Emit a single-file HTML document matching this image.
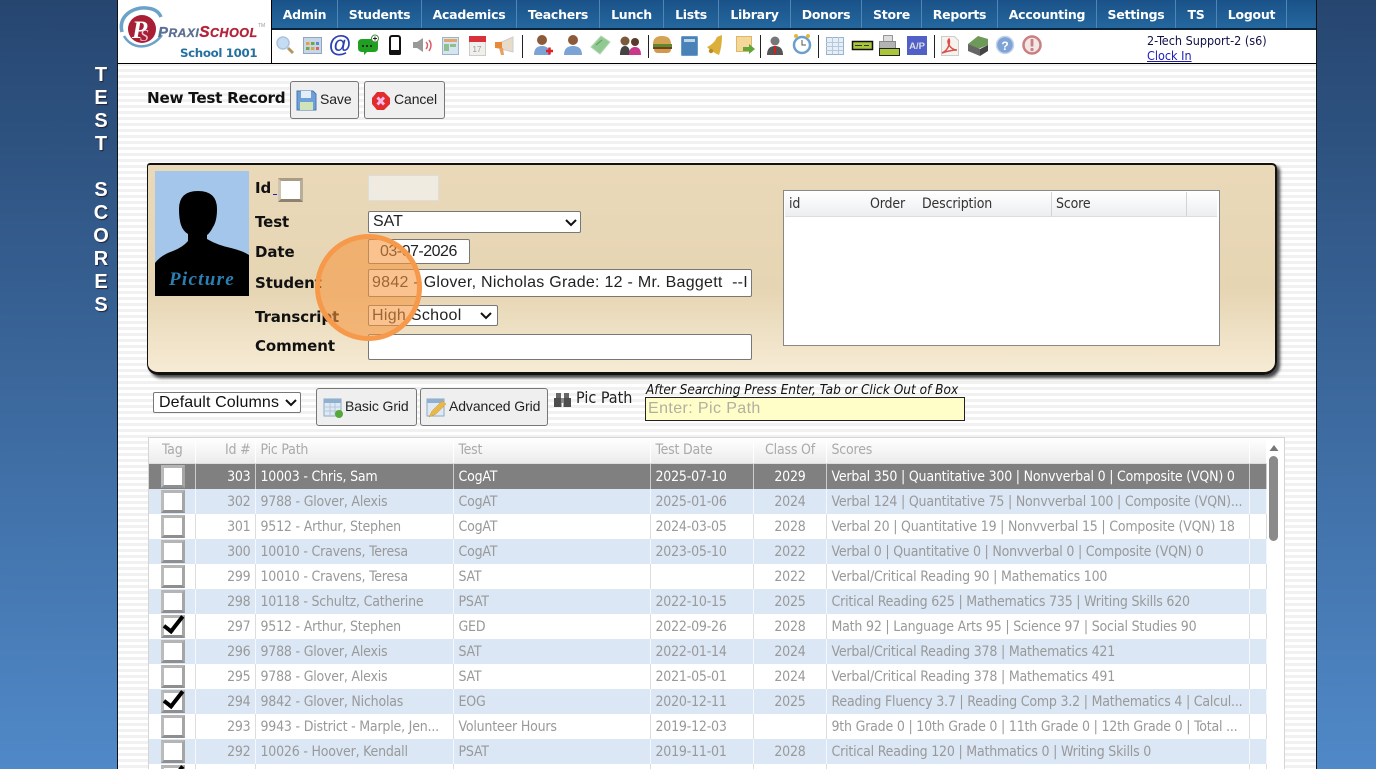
<!DOCTYPE html>
<html><head><meta charset="utf-8"><title>Test Scores</title>
<style>
html,body{margin:0;padding:0;width:1376px;height:769px;overflow:hidden}
body{background:linear-gradient(#264670,#5089c8);font-family:"Liberation Sans",sans-serif;position:relative}
.a{position:absolute;white-space:nowrap}
#page{position:absolute;left:117px;top:0;width:1198px;height:769px;border-left:1px solid #111;border-right:1px solid #111;background:repeating-linear-gradient(#fff 0,#fff 3px,#f1f1f1 3px,#f1f1f1 6px)}
#side{position:absolute;left:86px;top:64px;width:30px;text-align:center;font:bold 20px/23px "Liberation Sans",sans-serif;color:#fff;text-shadow:1px 1px 1px #223}
#nav{position:absolute;left:272px;top:0;width:1044px;height:29px;background:linear-gradient(#1a5288,#24689f)}
#nav span{position:absolute;top:0;height:29px;line-height:29px;text-align:center;color:#fff;font:bold 12.5px/29px "DejaVu Sans",sans-serif;letter-spacing:-.25px;border-right:1px solid #4f86b5;box-sizing:border-box}
.lab{position:absolute;left:255px;font:bold 15px/20px "DejaVu Sans",sans-serif;color:#111;letter-spacing:-.1px}
.ctl{position:absolute;box-sizing:border-box;background:#fff;border:1px solid #777;border-radius:2px;font:16px "Liberation Sans",sans-serif;color:#222;white-space:nowrap;overflow:hidden;padding-left:4px}
.btn{position:absolute;box-sizing:border-box;background:#efefef;border:1px solid #777;border-radius:3px;font:14px "Liberation Sans",sans-serif;color:#222}
.btn b{font-weight:normal;position:absolute;white-space:nowrap;top:9px;letter-spacing:-.1px}
#grid{position:absolute;left:148px;top:437px;width:1135px;height:340px;background:#fff;border:1px solid #d5d5d5;overflow:hidden}
table{border-collapse:collapse;table-layout:fixed;position:absolute;left:0;top:0;width:1117px}
td,th{padding:1px 4px 0 5px;height:25px;font:14px/24px "DejaVu Sans",sans-serif;font-stretch:condensed;letter-spacing:-.2px;color:#999;border-right:1px solid #ddd;white-space:nowrap;overflow:hidden;box-sizing:border-box;font-weight:normal;text-align:left}
th{height:25px;padding-top:0;line-height:24px;color:#aaa;background:linear-gradient(#fff,#ececec);border-right:1px solid #fff;border-bottom:1px solid #ddd}
tr:nth-child(even) td{background:#dbe7f5;border-right-color:#f4f8fc}
tr.sel td{background:#808080;color:#fff;border-right-color:#ccc}
.r{text-align:right}.c{text-align:center}
.cb{display:block;box-sizing:border-box;width:24px;height:23px;margin:1px 0 0 12px;background:#fff;border:3px solid;border-color:#b5b5b5 #a5a5a5 #8e8e8e #bbb;position:relative}
td.k{padding:0}
.cb.on:after{content:"";position:absolute;left:4px;top:-6px;width:7px;height:17px;border:solid #000;border-width:0 4px 4px 0;transform:rotate(38deg);box-sizing:content-box}
#sc{position:absolute;left:783px;top:190px;width:437px;height:156px;box-sizing:border-box;background:#fff;border:1px solid #888}
#sc div{position:absolute;top:1px;height:25px;box-sizing:border-box;background:linear-gradient(#fff,#eceef0);border-bottom:1px solid #ddd;border-right:1px solid #d4d4d4;font:14px/24px "DejaVu Sans",sans-serif;font-stretch:condensed;letter-spacing:-.15px;color:#333;padding-left:4px}
</style></head><body>
<div id="page"></div>
<div id="side">T<br>E<br>S<br>T<br><br>S<br>C<br>O<br>R<br>E<br>S</div>

<!-- header -->
<div class="a" style="left:118px;top:0;width:1198px;height:63px;background:#fff"></div>
<div class="a" style="left:118px;top:63px;width:1198px;height:1px;background:#000"></div>
<div class="a" style="left:271px;top:0;width:1px;height:63px;background:#000"></div>
<div id="nav">
<span style="left:0;width:66px">Admin</span><span style="left:66px;width:84px">Students</span><span style="left:150px;width:95px">Academics</span><span style="left:245px;width:83px">Teachers</span><span style="left:328px;width:64px">Lunch</span><span style="left:392px;width:55px">Lists</span><span style="left:447px;width:72px">Library</span><span style="left:519px;width:71px">Donors</span><span style="left:590px;width:60px">Store</span><span style="left:650px;width:76px">Reports</span><span style="left:726px;width:99px">Accounting</span><span style="left:825px;width:79px">Settings</span><span style="left:904px;width:41px">TS</span><span style="left:945px;width:70px">Logout</span>
</div>
<div class="a" style="left:272px;top:28px;width:1044px;height:2px;background:#0b2238"></div>

<!-- logo -->
<svg class="a" style="left:119px;top:4px" width="150" height="44" viewBox="0 0 150 44">
<path d="M3 28C-1 12 14 3 27 4c8 .5 13 4 15 9" fill="none" stroke="#6aa2c9" stroke-width="3.500"/>
<path d="M5 32C13 46 32 46 43 31" fill="none" stroke="#6aa2c9" stroke-width="2.500"/>
<circle cx="23" cy="25" r="14" fill="#a81e35"/>
<text x="13" y="34" font-family="Liberation Serif,serif" font-style="italic" font-weight="bold" font-size="25" fill="#fff">P</text>
<text x="21" y="37" font-family="Liberation Serif,serif" font-style="italic" font-size="17" fill="#ecd">S</text>
<text x="39" y="33" font-family="Liberation Sans,sans-serif" font-style="italic" font-weight="bold" font-size="15" fill="#5a6f94" letter-spacing=".5" stroke="#5a6f94" stroke-width=".3">P<tspan font-size="12">RAXI</tspan><tspan fill="#b3223a" stroke="#b3223a" font-size="15.500">S</tspan><tspan fill="#b3223a" stroke="#b3223a" font-size="12.500">CHOOL</tspan></text>
<text x="139" y="23" font-family="Liberation Sans,sans-serif" font-size="5" fill="#999">TM</text>
</svg>
<div class="a" style="left:180px;top:46px;font:bold 11.8px/15px 'DejaVu Sans',sans-serif;letter-spacing:-.35px;color:#25709f">School 1001</div>

<!-- icons -->
<svg class="a" style="left:272px;top:30px" width="790" height="33" viewBox="272 30 790 33">
<g stroke="#222"><path d="M522.500 35v23M648.500 35v23M760.500 35v23M818.500 35v23M934.500 35v23" stroke-width="1"/></g>
<circle cx="283" cy="43" r="6" fill="#c5dcf3" stroke="#a9c4df" stroke-width="1.500"/><path d="M288 48l5 5" stroke="#b59560" stroke-width="3"/>
<rect x="303.500" y="37.500" width="18" height="16" fill="#c7d7e9" stroke="#8ea6c0"/><g><rect x="306" y="42" width="3.500" height="3" fill="#e4a23d"/><rect x="311" y="42" width="3.500" height="3" fill="#6aa84f"/><rect x="316" y="42" width="3" height="3" fill="#5b8ccc"/><rect x="306" y="47" width="3.500" height="3" fill="#6aa84f"/><rect x="311" y="47" width="3.500" height="3" fill="#e4a23d"/><rect x="316" y="47" width="3" height="3" fill="#d36b5c"/></g>
<text x="340" y="52" text-anchor="middle" font-family="Liberation Sans,sans-serif" font-weight="bold" font-size="23" fill="#2b3fb5">@</text>
<path d="M362 39h12q4 0 4 4v5q0 4-4 4h-7l-3 3v-3h-2q-4 0-4-4v-5q0-4 4-4z" fill="#1fa021"/><circle cx="363" cy="46" r="1.100" fill="#222"/><circle cx="367" cy="46" r="1.100" fill="#222"/><circle cx="371" cy="46" r="1.100" fill="#222"/><circle cx="375" cy="38.500" r="3.500" fill="#fff" stroke="#4a8a4a"/><path d="M373 38.500h4M375 36.500v4" stroke="#222"/>
<rect x="390" y="36" width="10" height="18" rx="2" fill="#fff" stroke="#111" stroke-width="2"/><rect x="389" y="50" width="12" height="5" rx="1.500" fill="#111"/>
<path d="M413 42h4l6-4v14l-6-4h-4z" fill="#999"/><path d="M426 42q3 3 0 7M429 40q4 5 0 11" stroke="#d9606b" stroke-width="1.500" fill="none"/>
<rect x="442.500" y="37.500" width="16" height="17" fill="#d6e3f0" stroke="#9db4cc"/><rect x="444" y="39" width="13" height="3" fill="#e3a56a"/><rect x="444" y="44" width="5" height="7" fill="#8fbf8f"/><rect x="450" y="44" width="6" height="3" fill="#8fbf8f"/>
<rect x="469.500" y="36.500" width="16" height="19" fill="#f1efec" stroke="#ccc"/><rect x="469" y="36" width="17" height="6" fill="#d9313a"/><text x="477" y="52" text-anchor="middle" font-family="Liberation Sans" font-size="8" fill="#999">17</text>
<path d="M497 44l16-7v15l-16-4z" fill="#e8dcc8" stroke="#ccc"/><rect x="495" y="42" width="7" height="6" fill="#e88a3a"/><path d="M499 48l2 7h3l-1-7z" fill="#e9a05e"/>
<circle cx="542" cy="40" r="5" fill="#8a5a3a"/><path d="M534 55q0-9 8-9t8 9z" fill="#7ba3d6"/><path d="M546 51h7M549.500 47.500v7" stroke="#e01f26" stroke-width="2.500"/>
<circle cx="573" cy="40" r="5" fill="#8a5a3a"/><path d="M564 55q0-9 9-9t9 9z" fill="#7ba3d6"/>
<path d="M591 47l10-11 9 6-10 12z" fill="#92c992" stroke="#b3d8b3"/><path d="M596 45l6-5" stroke="#5a9c5a"/>
<circle cx="625" cy="41" r="4.500" fill="#7a5a3a"/><circle cx="635" cy="42" r="4" fill="#5a3a2a"/><path d="M620 55q0-9 5-9t5 9z" fill="#444"/><path d="M629 55q0-8 6-8t6 8z" fill="#c9388a"/>
<path d="M653 44q0-8 9-8t9 8z" fill="#d4a354"/><rect x="653" y="44" width="19" height="3" fill="#5c8a2e"/><rect x="653" y="47" width="19" height="2" fill="#7a3d1c"/><path d="M654 49h17q0 4-4 4h-9q-4 0-4-4z" fill="#cf9a4d"/>
<rect x="681.500" y="36.500" width="16" height="19" rx="1" fill="#4a82b8" stroke="#6a9cc8"/><rect x="684" y="39" width="11" height="3" fill="#bcd5ea"/>
<path d="M707 47q7-3 10-10l5-2q0 12-3 20-7-3-12-8z" fill="#dcae3a"/><circle cx="711" cy="51" r="2.200" fill="#b98a20"/>
<rect x="736.500" y="36.500" width="15" height="15" fill="#f4d79a" stroke="#e0b860"/><path d="M743 47h6v-3l6 5-6 5v-3h-6z" fill="#5fa63c"/>
<circle cx="775" cy="41" r="4.500" fill="#777"/><path d="M767 55q0-9 8-9t8 9z" fill="#555"/><path d="M775 46v8" stroke="#c22" stroke-width="2"/>
<circle cx="802" cy="45" r="8" fill="#fff" stroke="#6b9fd0" stroke-width="2.500"/><path d="M802 40v5h4" stroke="#555" fill="none"/><circle cx="796" cy="36" r="2" fill="#e4b83a"/><circle cx="808" cy="36" r="2" fill="#e4b83a"/>
<rect x="826.500" y="37.500" width="17" height="17" fill="#e7eef6" stroke="#96b3d0"/><path d="M826 42.500h17M826 46.500h17M826 50.500h17M832.500 37v17M838.500 37v17" stroke="#b4c9dd"/>
<rect x="852.500" y="41.500" width="20" height="8" fill="#a9c53a" stroke="#111" stroke-width="1.500"/><path d="M855 45.500h7M864 45.500h5" stroke="#333"/>
<rect x="883.500" y="35.500" width="9" height="7" fill="#ddd" stroke="#999"/><rect x="879.500" y="41.500" width="16" height="7" fill="#b3b3b3" stroke="#888"/><rect x="879.500" y="48.500" width="20" height="7" fill="#a9c53a" stroke="#222"/>
<rect x="907" y="36" width="20" height="19" fill="#5060c8"/><text x="917" y="49" text-anchor="middle" font-family="Liberation Sans" font-weight="bold" font-size="9.500" fill="#ddd">A/P</text>
<path d="M941.500 36.500h13l4 4v15h-17z" fill="#f6f2ee" stroke="#ccc"/><path d="M942 53q5-2 7-8 1-4 0-6-2 2 0 6 3 5 8 5-6 0-15 3z" fill="none" stroke="#d9504a" stroke-width="1.500"/>
<path d="M968 44l10-8 10 3v6l-10 4z" fill="#6d9a58"/><path d="M968 44l12 5v7l-12-5z" fill="#666"/><path d="M980 49l8-4v6l-8 5z" fill="#444"/>
<circle cx="1005" cy="45" r="8.500" fill="#7fa3d6" stroke="#c3d3ea" stroke-width="1.500"/><text x="1005" y="50" text-anchor="middle" font-family="Liberation Sans" font-weight="bold" font-size="12" fill="#fff">?</text>
<circle cx="1032" cy="45" r="8.500" fill="#f3e6e6" stroke="#c98080" stroke-width="2.500"/><rect x="1030.600" y="39" width="2.800" height="7.500" fill="#c98080"/><circle cx="1032" cy="49.500" r="1.600" fill="#c98080"/>
</svg>
<div class="a" style="left:1147px;top:33px;font:12.5px/15px 'DejaVu Sans',sans-serif;font-stretch:condensed;color:#11114a">2-Tech Support-2 (s6)<br><u style="color:#1c1cb8">Clock In</u></div>

<!-- title and buttons -->
<div class="a" style="left:147px;top:89px;font:bold 15.2px/18px 'DejaVu Sans',sans-serif;letter-spacing:-.27px;color:#111">New Test Record</div>
<div class="btn" style="left:290px;top:81px;width:69px;height:38px"><svg class="a" style="left:5px;top:8px" width="21" height="21"><path d="M1 1h16l3 3v16H1z" fill="#6d9fd8" stroke="#4a78b0"/><rect x="5" y="1" width="10" height="7" fill="#e4edf6"/><rect x="4" y="12" width="13" height="8" fill="#cfe3b8"/></svg><b style="left:29px">Save</b></div>
<div class="btn" style="left:364px;top:81px;width:81px;height:38px"><svg class="a" style="left:6px;top:9px" width="20" height="20"><path d="M6 1h7l6 6v6l-6 6H6L1 13V7z" fill="#e22b2b"/><path d="M6.500 6.500l6.500 7M13 6.500l-6.500 7" stroke="#fbe" stroke-width="2.800"/></svg><b style="left:29px">Cancel</b></div>

<!-- panel -->
<div class="a" style="left:147px;top:163px;width:1127px;height:207px;border:2px solid #111;border-width:2px 2px 3px 1px;border-radius:3px 5px 13px 11px;background:linear-gradient(#ead9b9,#e6d5b3 60%,#f6ebd5);box-shadow:3px 3px 3px #444"></div>
<svg class="a" style="left:155px;top:171px" width="94" height="125" viewBox="0 0 94 125">
<rect width="94" height="125" fill="#a3c6ea"/>
<path d="M24 38q0-18 19-18t19 18q0 12-4 18-3 6-6 8v4q10 6 24 9 12 3 18 7v41H0V92q6-8 18-12 10-4 15-10v-7q-5-3-7-9-2-6-2-16z" fill="#000"/>
<rect y="100" width="94" height="25" fill="#000"/>
<text x="47" y="114" text-anchor="middle" font-family="Liberation Serif,serif" font-style="italic" font-weight="bold" font-size="19" fill="#2a7fb5" letter-spacing="1.300">Picture</text>
</svg>
<div class="lab" style="top:178px">Id</div>
<div class="a" style="left:273px;top:194px;width:4px;height:1px;background:#2222aa"></div>
<div class="a" style="left:278px;top:178px;width:25px;height:24px;box-sizing:border-box;background:#fff;border:3px solid;border-color:#a89c85 #b8ad98 #8d826e #cfc4ad"></div>
<div class="lab" style="top:212px">Test</div>
<div class="lab" style="top:242px">Date</div>
<div class="lab" style="top:273px">Student</div>
<div class="lab" style="top:307px">Transcript</div>
<div class="lab" style="top:336px">Comment</div>
<div class="ctl" style="left:368px;top:175px;width:71px;height:26px;background:#f0ebe0;border-color:#ddd"></div>
<div class="ctl" style="left:368px;top:211px;width:213px;height:22px;line-height:20px">SAT<svg class="a" style="right:3px;top:7px" width="12" height="8"><path d="M1 1l5 5 5-5" fill="none" stroke="#111" stroke-width="2"/></svg></div>
<div class="ctl" style="left:368px;top:239px;width:102px;height:25px;line-height:23px;padding-left:11px;letter-spacing:-.5px">03-07-2026</div>
<div class="ctl" style="left:368px;top:269px;width:384px;height:28px;line-height:26px;color:#222;padding-left:3px;letter-spacing:.27px">9842 - Glover, Nicholas Grade: 12 - Mr. Baggett &nbsp;--I</div>
<div class="ctl" style="left:368px;top:305px;width:130px;height:21px;line-height:19px;padding-left:3px;letter-spacing:.3px">High School<svg class="a" style="right:5px;top:6px" width="12" height="8"><path d="M1 1l5 5 5-5" fill="none" stroke="#111" stroke-width="2"/></svg></div>
<div class="ctl" style="left:368px;top:334px;width:384px;height:26px"></div>
<div id="sc">
<div style="left:1px;width:73px">id</div><div style="left:73px;width:61px;padding-left:13px">Order</div><div style="left:133px;width:135px;padding-left:5px">Description</div><div style="left:268px;width:135px">Score</div><div style="left:403px;width:30px;border-right:0"></div>
</div>

<!-- toolbar -->
<div class="ctl" style="left:153px;top:392px;width:148px;height:21px;line-height:20px;padding-left:5px;color:#111;letter-spacing:.12px">Default Columns<svg class="a" style="right:3px;top:6px" width="12" height="8"><path d="M1 1l5 5 5-5" fill="none" stroke="#111" stroke-width="2"/></svg></div>
<div class="btn" style="left:316px;top:388px;width:101px;height:38px"><svg class="a" style="left:6px;top:9px" width="22" height="21"><rect x="1" y="1" width="17" height="17" fill="#dfe9f4" stroke="#8ea9c6"/><rect x="1" y="1" width="17" height="4" fill="#8fb0d3"/><path d="M1 9h17M1 13h17M7 5v13M12 5v13" stroke="#b6c8db"/><circle cx="16" cy="16" r="4" fill="#55a83a"/></svg><b style="left:28px">Basic Grid</b></div>
<div class="btn" style="left:420px;top:388px;width:128px;height:38px"><svg class="a" style="left:5px;top:9px" width="22" height="21"><rect x="1" y="1" width="17" height="17" fill="#dfe9f4" stroke="#8ea9c6"/><rect x="1" y="1" width="17" height="4" fill="#8fb0d3"/><path d="M3 19l3-6 10-10 4 3-10 10z" fill="#eab84a" stroke="#c99a30" stroke-width=".5"/></svg><b style="left:28px">Advanced Grid</b></div>
<svg class="a" style="left:554px;top:392px" width="17" height="16"><path d="M2 1h5v5H2zM10 1h5v5h-5z" fill="#666"/><path d="M0 6h7.500v9H0zM9.500 6H17v9H9.500z" fill="#4d4d4d"/><rect x="7" y="6" width="3" height="5" fill="#888"/></svg>
<div class="a" style="left:576px;top:389px;font:16px/18px 'DejaVu Sans',sans-serif;font-stretch:condensed;color:#222">Pic Path</div>
<div class="a" style="left:646px;top:382px;font:italic 13.5px/16px 'DejaVu Sans',sans-serif;font-stretch:condensed;color:#111">After Searching Press Enter, Tab or Click Out of Box</div>
<div class="ctl" style="left:645px;top:397px;width:320px;height:24px;background:#fffdc8;border:1px solid #222;border-radius:0;line-height:22px;padding-left:2px;letter-spacing:.4px;color:#b0b0a0">Enter: Pic Path</div>

<!-- grid -->
<div id="grid">
<table>
<colgroup><col style="width:46px"><col style="width:60px"><col style="width:198px"><col style="width:197px"><col style="width:103px"><col style="width:73px"><col style="width:423px"><col style="width:17px"></colgroup>
<thead><tr><th class="c">Tag</th><th class="r">Id #</th><th>Pic Path</th><th>Test</th><th>Test Date</th><th class="c">Class Of</th><th>Scores</th><th></th></tr></thead>
<tbody>
<tr class="sel"><td class="k"><i class="cb"></i></td><td class="r">303</td><td>10003 - Chris, Sam</td><td>CogAT</td><td>2025-07-10</td><td class="c">2029</td><td>Verbal 350 | Quantitative 300 | Nonvverbal 0 | Composite (VQN) 0</td><td></td></tr>
<tr><td class="k"><i class="cb"></i></td><td class="r">302</td><td>9788 - Glover, Alexis</td><td>CogAT</td><td>2025-01-06</td><td class="c">2024</td><td>Verbal 124 | Quantitative 75 | Nonvverbal 100 | Composite (VQN)...</td><td></td></tr>
<tr><td class="k"><i class="cb"></i></td><td class="r">301</td><td>9512 - Arthur, Stephen</td><td>CogAT</td><td>2024-03-05</td><td class="c">2028</td><td>Verbal 20 | Quantitative 19 | Nonvverbal 15 | Composite (VQN) 18</td><td></td></tr>
<tr><td class="k"><i class="cb"></i></td><td class="r">300</td><td>10010 - Cravens, Teresa</td><td>CogAT</td><td>2023-05-10</td><td class="c">2022</td><td>Verbal 0 | Quantitative 0 | Nonvverbal 0 | Composite (VQN) 0</td><td></td></tr>
<tr><td class="k"><i class="cb"></i></td><td class="r">299</td><td>10010 - Cravens, Teresa</td><td>SAT</td><td></td><td class="c">2022</td><td>Verbal/Critical Reading 90 | Mathematics 100</td><td></td></tr>
<tr><td class="k"><i class="cb"></i></td><td class="r">298</td><td>10118 - Schultz, Catherine</td><td>PSAT</td><td>2022-10-15</td><td class="c">2025</td><td>Critical Reading 625 | Mathematics 735 | Writing Skills 620</td><td></td></tr>
<tr><td class="k"><i class="cb on"></i></td><td class="r">297</td><td>9512 - Arthur, Stephen</td><td>GED</td><td>2022-09-26</td><td class="c">2028</td><td>Math 92 | Language Arts 95 | Science 97 | Social Studies 90</td><td></td></tr>
<tr><td class="k"><i class="cb"></i></td><td class="r">296</td><td>9788 - Glover, Alexis</td><td>SAT</td><td>2022-01-14</td><td class="c">2024</td><td>Verbal/Critical Reading 378 | Mathematics 421</td><td></td></tr>
<tr><td class="k"><i class="cb"></i></td><td class="r">295</td><td>9788 - Glover, Alexis</td><td>SAT</td><td>2021-05-01</td><td class="c">2024</td><td>Verbal/Critical Reading 378 | Mathematics 491</td><td></td></tr>
<tr><td class="k"><i class="cb on"></i></td><td class="r">294</td><td>9842 - Glover, Nicholas</td><td>EOG</td><td>2020-12-11</td><td class="c">2025</td><td>Reading Fluency 3.7 | Reading Comp 3.2 | Mathematics 4 | Calcul...</td><td></td></tr>
<tr><td class="k"><i class="cb"></i></td><td class="r">293</td><td>9943 - District - Marple, Jen...</td><td>Volunteer Hours</td><td>2019-12-03</td><td class="c"></td><td>9th Grade 0 | 10th Grade 0 | 11th Grade 0 | 12th Grade 0 | Total ...</td><td></td></tr>
<tr><td class="k"><i class="cb"></i></td><td class="r">292</td><td>10026 - Hoover, Kendall</td><td>PSAT</td><td>2019-11-01</td><td class="c">2028</td><td>Critical Reading 120 | Mathmatics 0 | Writing Skills 0</td><td></td></tr>
<tr><td class="k"><i class="cb on"></i></td><td class="r"></td><td></td><td></td><td></td><td class="c"></td><td></td><td></td></tr>
</tbody></table>
</div>
<svg class="a" style="left:1268px;top:442px" width="12" height="102"><path d="M1.500 9L6 3l4.500 6z" fill="#777"/><rect x="1" y="14" width="9" height="85" rx="4.500" fill="#8a8a8a"/></svg>

<!-- highlight circle -->
<div class="a" style="left:315px;top:234px;width:107px;height:107px;box-sizing:border-box;border-radius:50%;border:5px solid #f6994a;background:rgba(246,150,62,.58)"></div>
</body></html>
